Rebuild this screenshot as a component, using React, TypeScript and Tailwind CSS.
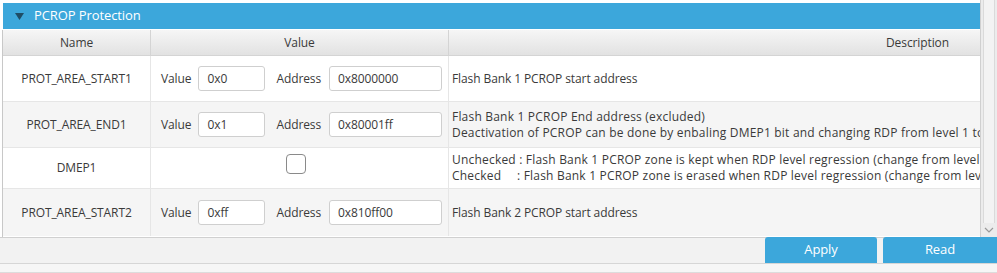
import React from 'react';

const rowBase = 'grid grid-cols-[148px_298px_1fr] border-b border-[#e6e6e6]';

const Field: React.FC<{ label: string; value: string; w: string; gap: string }> = ({ label, value, w, gap }) => (
  <div className="flex items-center">
    <span className={gap}>{label}</span>
    <div className={`${w} h-[25px] bg-white border border-[#cfcfcf] rounded-[3px] flex items-center pl-[8px]`}>
      {value}
    </div>
  </div>
);

const ValueCell: React.FC<{ v: string; a: string }> = ({ v, a }) => (
  <div className="border-r border-[#e6e6e6] flex items-center pl-[10px] gap-[11px]">
    <Field label="Value" value={v} w="w-[67px]" gap="mr-[7px]" />
    <Field label="Address" value={a} w="w-[113px]" gap="mr-[8px]" />
  </div>
);

const NameCell: React.FC<{ name: string }> = ({ name }) => (
  <div className="border-r border-[#e6e6e6] flex items-center justify-center">{name}</div>
);

export default function App() {
  return (
    <div className="w-[997px] h-[273px] bg-[#f0f0f0] overflow-hidden text-[12px] text-[#3a3a3a] font-['Open_Sans','Noto_Sans',sans-serif] tracking-[-0.1px]">
      <div className="flex h-[237px] bg-white">
        <div className="w-[980px] pt-[3px] pl-[3px] flex flex-col">
          <div className="h-[26px] bg-[#3ca7db] flex items-center text-white text-[13px]">
            <svg className="ml-[12px] mr-[10px]" width="9" height="7" viewBox="0 0 9 7">
              <path d="M0 0 L9 0 L4.5 7 Z" fill="#1f4d66" />
            </svg>
            PCROP Protection
          </div>
          <div className="mt-[1px] flex-1 border-l border-[#c8c8c8] -ml-[1px] flex flex-col">
            <div className="grid grid-cols-[148px_298px_1fr] h-[26px] bg-gradient-to-b from-[#f6f6f6] to-[#e2e2e2] border-b border-[#d4d4d4] text-[12px]">
              <div className="flex items-center justify-center border-r border-[#d4d4d4]">Name</div>
              <div className="flex items-center justify-center border-r border-[#d4d4d4]">Value</div>
              <div className="flex items-center justify-end pr-[31px]">Description</div>
            </div>

            <div className={`${rowBase} h-[46px] bg-white`}>
              <NameCell name="PROT_AREA_START1" />
              <ValueCell v="0x0" a="0x8000000" />
              <div className="flex items-center pl-[3px] whitespace-nowrap overflow-hidden">Flash Bank 1 PCROP start address</div>
            </div>

            <div className={`${rowBase} h-[46px] bg-[#f5f5f5]`}>
              <NameCell name="PROT_AREA_END1" />
              <ValueCell v="0x1" a="0x80001ff" />
              <div className="flex flex-col justify-center pl-[3px] whitespace-nowrap overflow-hidden leading-[16px] tracking-[0.2px]">
                <span>Flash Bank 1 PCROP End address (excluded)</span>
                <span>Deactivation of PCROP can be done by enbaling DMEP1 bit and changing RDP from level 1 to 0</span>
              </div>
            </div>

            <div className={`${rowBase} h-[41px] bg-white`}>
              <NameCell name="DMEP1" />
              <div className="border-r border-[#e6e6e6] flex justify-center pt-[6px]">
                <div className="w-[20px] h-[20px] rounded-[4px] border border-[#8a8a8a] bg-white ml-[-8px]" />
              </div>
              <div className="flex flex-col justify-center pl-[3px] whitespace-nowrap overflow-hidden leading-[16px] tracking-[0.2px]">
                <span>Unchecked : Flash Bank 1 PCROP zone is kept when RDP level regression (change from level 1 to 0)</span>
                <span><span className="inline-block w-[65px]">Checked</span>: Flash Bank 1 PCROP zone is erased when RDP level regression (change from level 1 to 0)</span>
              </div>
            </div>

            <div className="grid grid-cols-[148px_298px_1fr] h-[47px] bg-[#f5f5f5]">
              <NameCell name="PROT_AREA_START2" />
              <ValueCell v="0xff" a="0x810ff00" />
              <div className="flex items-center pl-[3px] whitespace-nowrap overflow-hidden">Flash Bank 2 PCROP start address</div>
            </div>
          </div>
        </div>
        <div className="w-[17px] bg-[#ececec] border-l border-[#d0d0d0] flex flex-col">
          <div className="flex-1 mx-[2px] border-x border-[#dadada] bg-[#f3f3f3]" />
          <div className="h-[14px] flex items-center justify-center">
            <svg width="10" height="6" viewBox="0 0 10 6">
              <path d="M1 1 L5 5 L9 1" fill="none" stroke="#9a9a9a" strokeWidth="1.2" />
            </svg>
          </div>
        </div>
      </div>
      <div className="h-[27px] border-t border-[#d0d0d0] border-b border-b-[#d6d6d6] bg-[#f2f2f2] flex justify-end items-end pl-[2px]">
        <div className="flex gap-[6px] h-[26px]">
          <button className="w-[112px] h-full bg-[#3ca7db] text-white text-[13px] rounded-t-[3px]">Apply</button>
          <button className="w-[114px] h-full bg-[#3ca7db] text-white text-[13px] rounded-tl-[3px]">Read</button>
        </div>
      </div>
      <div className="h-[9px] bg-[#f6f6f6] border-b border-[#dcdcdc]" />
    </div>
  );
}
